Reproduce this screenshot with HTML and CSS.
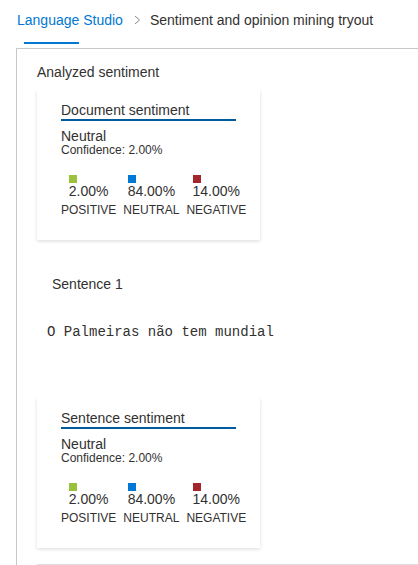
FILE: index.html
```html
<!DOCTYPE html>
<html>
<head>
<meta charset="utf-8">
<link rel="stylesheet" href="styles.css">
</head>
<body>
<div class="crumbs">
  <span class="crumb-link">Language Studio</span>
  <svg class="chev" width="7" height="10" viewBox="0 0 7 10"><path d="M1 1 L5.5 5 L1 9" fill="none" stroke="#8a8886" stroke-width="1"/></svg>
  <span class="crumb-current">Sentiment and opinion mining tryout</span>
</div>
<div class="tab-line"></div>
<div class="panel">
  <div class="section-title">Analyzed sentiment</div>
  <div class="card">
    <div class="card-title">Document sentiment</div>
    <div class="label-main">Neutral</div>
    <div class="confidence">Confidence: 2.00%</div>
    <div class="chart">
      <div class="col"><div class="inner"><div class="sq green"></div><div class="pct">2.00%</div></div><div class="lbl">POSITIVE</div></div>
      <div class="col"><div class="inner"><div class="sq blue"></div><div class="pct">84.00%</div></div><div class="lbl">NEUTRAL</div></div>
      <div class="col"><div class="inner"><div class="sq red"></div><div class="pct">14.00%</div></div><div class="lbl">NEGATIVE</div></div>
    </div>
  </div>
  <div class="sentence-title">Sentence 1</div>
  <div class="sentence-text">O Palmeiras não tem mundial</div>
  <div class="card card2">
    <div class="card-title">Sentence sentiment</div>
    <div class="label-main">Neutral</div>
    <div class="confidence">Confidence: 2.00%</div>
    <div class="chart">
      <div class="col"><div class="inner"><div class="sq green"></div><div class="pct">2.00%</div></div><div class="lbl">POSITIVE</div></div>
      <div class="col"><div class="inner"><div class="sq blue"></div><div class="pct">84.00%</div></div><div class="lbl">NEUTRAL</div></div>
      <div class="col"><div class="inner"><div class="sq red"></div><div class="pct">14.00%</div></div><div class="lbl">NEGATIVE</div></div>
    </div>
  </div>
  <div class="divider"></div>
</div>
</body>
</html>
```
FILE: styles.css
```css
html, body {
  margin: 0;
  padding: 0;
  background: #ffffff;
  overflow: hidden;
}
body {
  font-family: "Liberation Sans", Arial, sans-serif;
  color: #323130;
  width: 418px;
  height: 565px;
}
.crumbs {
  display: flex;
  align-items: center;
  padding: 10px 0 0 17px;
  height: 20px;
  font-size: 14px;
  line-height: 20px;
  white-space: nowrap;
}
.crumb-link {
  color: #0078d4;
}
.chev {
  margin: 0 9px 0 11px;
}
.crumb-current {
  color: #323130;
}
.tab-line {
  margin: 12px 0 0 24px;
  width: 55px;
  height: 2px;
  background: #0078d4;
}
.panel {
  margin: 4px 0 0 16px;
  border-top: 1px solid #c8c8c8;
  border-left: 1px solid #c8c8c8;
  padding: 13px 0 0 20px;
}
.section-title {
  font-size: 14px;
  line-height: 20px;
}
.card {
  margin-top: 7px;
  width: 175px;
  padding: 13px 24px 23px 24px;
  background: #fff;
  box-shadow: 0 1.6px 3.6px rgba(0,0,0,0.132), 0 0.3px 0.9px rgba(0,0,0,0.108);
}
.card-title {
  font-size: 14px;
  line-height: 17px;
  border-bottom: 2px solid #005a9e;
}
.label-main {
  margin-top: 7px;
  font-size: 14px;
  line-height: 16px;
}
.confidence {
  font-size: 12px;
  line-height: 12px;
}
.chart {
  display: flex;
  margin-top: 19px;
  gap: 7px;
}
.col {
  display: flex;
  flex-direction: column;
  align-items: center;
}
.inner {
  display: flex;
  flex-direction: column;
  align-items: flex-start;
}
.sq {
  width: 8px;
  height: 8px;
}
.green { background: #9bc13c; }
.blue { background: #0078d4; }
.red { background: #a4262c; }
.pct {
  font-size: 14px;
  line-height: 16px;
}
.lbl {
  margin-top: 4px;
  font-size: 12px;
  line-height: 14px;
}
.sentence-title {
  margin: 34px 0 0 15px;
  font-size: 14px;
  line-height: 20px;
}
.sentence-text {
  margin: 28px 0 0 10px;
  font-family: "Liberation Mono", "Courier New", monospace;
  font-size: 14px;
  line-height: 20px;
}
.card2 {
  margin-top: 55px;
}
.divider {
  margin-top: 16px;
  border-top: 1px solid #e1dfdd;
  height: 20px;
}
```
